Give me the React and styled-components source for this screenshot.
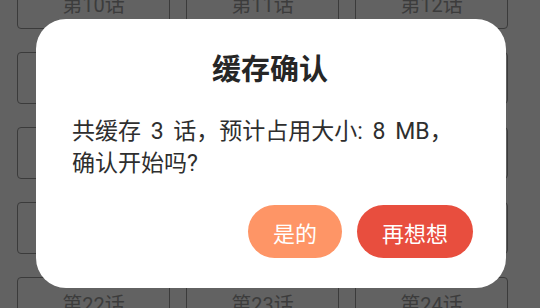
import React from 'react';
import styled, { createGlobalStyle } from 'styled-components';

const GlobalStyle = createGlobalStyle`
  html, body {
    margin: 0;
    padding: 0;
    width: 540px;
    height: 308px;
    overflow: hidden;
    font-family: Roboto, "Noto Sans CJK SC", sans-serif;
  }
`

const Page = styled.div`
  position: relative;
  width: 540px;
  height: 308px;
  overflow: hidden;
  background-color: #626262;
`
const Grid = styled.div`
  display: grid;
  grid-template-columns: repeat(3, 153px);
  grid-auto-rows: 52px;
  column-gap: 16px;
  row-gap: 23px;
  padding-left: 17px;
  margin-top: -23px;
`
const Episode = styled.div`
  box-sizing: border-box;
  display: flex;
  align-items: center;
  justify-content: center;
  border: 1.5px solid #3b3b3b;
  border-radius: 4px;
  color: #3c3c3c;
  font-size: 20px;
`
const Overlay = styled.div`
  position: absolute;
  inset: 0;
  display: flex;
  justify-content: center;
  align-items: flex-start;
  padding-top: 19px;
  padding-left: 2px;
`
const Dialog = styled.div`
  box-sizing: border-box;
  width: 470px;
  height: 269px;
  background: #ffffff;
  border-radius: 30px;
  padding: 31px 33px 30px 36px;
  display: flex;
  flex-direction: column;
`
const Title = styled.div`
  text-align: center;
  font-size: 29px;
  font-weight: bold;
  line-height: 40px;
  color: #262626;
  padding-right: 5px;
`
const Message = styled.div`
  margin-top: 26px;
  font-size: 23px;
  line-height: 32px;
  word-spacing: 4px;
  color: #2e2e2e;
  white-space: nowrap;
`
const Actions = styled.div`
  margin-top: auto;
  display: flex;
  justify-content: flex-end;
  gap: 15px;
`
const Button = styled.button`
  height: 53px;
  padding: 0 25px;
  border: none;
  border-radius: 27px;
  background-color: ${props => props.primary ? '#e84e3e' : '#fe9566'};
  color: #ffffff;
  font-family: inherit;
  font-size: 22px;
  cursor: pointer;
  outline: none;
`

const episodes = [];
for (let i = 10; i <= 24; i++) episodes.push(i);

export default function App() {
    return (
        <Page>
            <GlobalStyle />
            <Grid>
                {episodes.map((n) => (
                    <Episode key={n}>第{n}话</Episode>
                ))}
            </Grid>
            <Overlay>
                <Dialog>
                    <Title>缓存确认</Title>
                    <Message>
                        共缓存 3 话，预计占用大小: 8 MB，<br />
                        确认开始吗?
                    </Message>
                    <Actions>
                        <Button>是的</Button>
                        <Button primary>再想想</Button>
                    </Actions>
                </Dialog>
            </Overlay>
        </Page>
    )
}
